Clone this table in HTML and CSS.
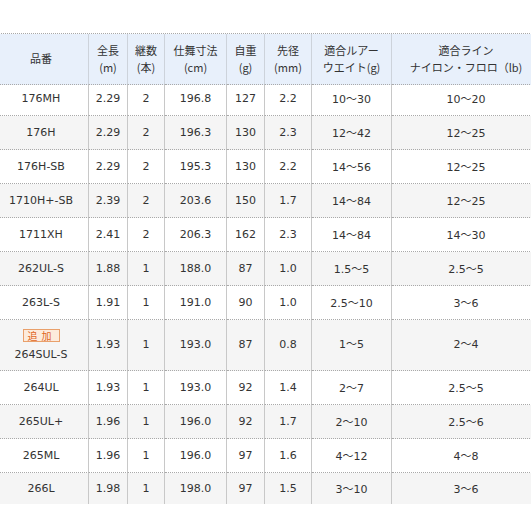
FILE: index.html
```html
<!DOCTYPE html>
<html lang="ja">
<head>
<meta charset="utf-8">
<title>スペック表</title>
<link rel="stylesheet" href="styles.css">
</head>
<body>
<table class="spec">
  <colgroup>
    <col class="c-name"><col class="c-len"><col class="c-pcs"><col class="c-close"><col class="c-wt"><col class="c-tip"><col class="c-lure"><col class="c-line">
  </colgroup>
  <thead>
    <tr>
      <th>品番</th>
      <th>全長<br>(m)</th>
      <th>継数<br>(本)</th>
      <th>仕舞寸法<br>(cm)</th>
      <th>自重<br>(g)</th>
      <th>先径<br>(mm)</th>
      <th>適合ルアー<br>ウエイト(g)</th>
      <th>適合ライン<br>ナイロン・フロロ（lb)</th>
    </tr>
  </thead>
  <tbody>
    <tr class="first"><td>176MH</td><td>2.29</td><td>2</td><td>196.8</td><td>127</td><td>2.2</td><td>10～30</td><td>10～20</td></tr>
    <tr class="alt"><td>176H</td><td>2.29</td><td>2</td><td>196.3</td><td>130</td><td>2.3</td><td>12～42</td><td>12～25</td></tr>
    <tr><td>176H-SB</td><td>2.29</td><td>2</td><td>195.3</td><td>130</td><td>2.2</td><td>14～56</td><td>12～25</td></tr>
    <tr class="alt"><td>1710H+-SB</td><td>2.39</td><td>2</td><td>203.6</td><td>150</td><td>1.7</td><td>14～84</td><td>12～25</td></tr>
    <tr><td>1711XH</td><td>2.41</td><td>2</td><td>206.3</td><td>162</td><td>2.3</td><td>14～84</td><td>14～30</td></tr>
    <tr class="alt"><td>262UL-S</td><td>1.88</td><td>1</td><td>188.0</td><td>87</td><td>1.0</td><td>1.5～5</td><td>2.5～5</td></tr>
    <tr><td>263L-S</td><td>1.91</td><td>1</td><td>191.0</td><td>90</td><td>1.0</td><td>2.5～10</td><td>3～6</td></tr>
    <tr class="alt tall"><td><span class="badge">追加</span><br>264SUL-S</td><td>1.93</td><td>1</td><td>193.0</td><td>87</td><td>0.8</td><td>1～5</td><td>2～4</td></tr>
    <tr><td>264UL</td><td>1.93</td><td>1</td><td>193.0</td><td>92</td><td>1.4</td><td>2～7</td><td>2.5～5</td></tr>
    <tr class="alt"><td>265UL+</td><td>1.96</td><td>1</td><td>196.0</td><td>92</td><td>1.7</td><td>2～10</td><td>2.5～6</td></tr>
    <tr><td>265ML</td><td>1.96</td><td>1</td><td>196.0</td><td>97</td><td>1.6</td><td>4～12</td><td>4～8</td></tr>
    <tr class="alt last"><td>266L</td><td>1.98</td><td>1</td><td>198.0</td><td>97</td><td>1.5</td><td>3～10</td><td>3～6</td></tr>
  </tbody>
</table>
</body>
</html>
```

FILE: styles.css
```css
html, body {
  margin: 0;
  padding: 0;
  background: #ffffff;
  overflow: hidden;
}

body {
  width: 531px;
  height: 531px;
}

.spec {
  margin: 33px 0 0 -6px;
  border-collapse: separate;
  border-spacing: 0;
  table-layout: fixed;
  width: 546px;
  border-top: 1px dotted #a9a9a9;
  font-family: "DejaVu Sans", "Noto Sans CJK JP", sans-serif;
  font-size: 11px;
  color: #333333;
}

.c-name { width: 95px; }
.c-len { width: 39px; }
.c-pcs { width: 37px; }
.c-close { width: 62px; }
.c-wt { width: 38px; }
.c-tip { width: 47px; }
.c-lure { width: 80px; }
.c-line { width: 148px; }

.spec th,
.spec td {
  box-sizing: border-box;
  padding: 0;
  text-align: center;
  vertical-align: middle;
  border-right: 1px solid #c8c8c8;
  border-bottom: 1px dotted #a9a9a9;
  font-weight: normal;
  height: 34px;
  padding-bottom: 1px;
}

.spec th {
  background: #e8f0fb;
  height: 51px;
  line-height: 17px;
  font-family: "Noto Sans CJK JP", "DejaVu Sans", sans-serif;
  font-size: 11px;
  border-right-color: #cdd3db;
}

.spec th:last-child,
.spec td:last-child {
  border-right: none;
}

.spec tr.first td {
  height: 31px;
  padding-bottom: 4px;
}

.spec tr.alt td {
  background: #f5f5f5;
}

.spec tr.tall td {
  height: 51px;
  line-height: 19px;
}

.spec tr.last td {
  height: 31px;
  border-bottom: none;
}

.badge {
  display: inline-block;
  box-sizing: border-box;
  height: 13px;
  padding: 0 3px 0 4px;
  border: 1px solid #e9a06b;
  background: #fdebdc;
  color: #e0661c;
  font-family: "Noto Sans CJK JP", sans-serif;
  font-size: 10px;
  line-height: 11px;
  letter-spacing: 4px;
  vertical-align: middle;
}
```
